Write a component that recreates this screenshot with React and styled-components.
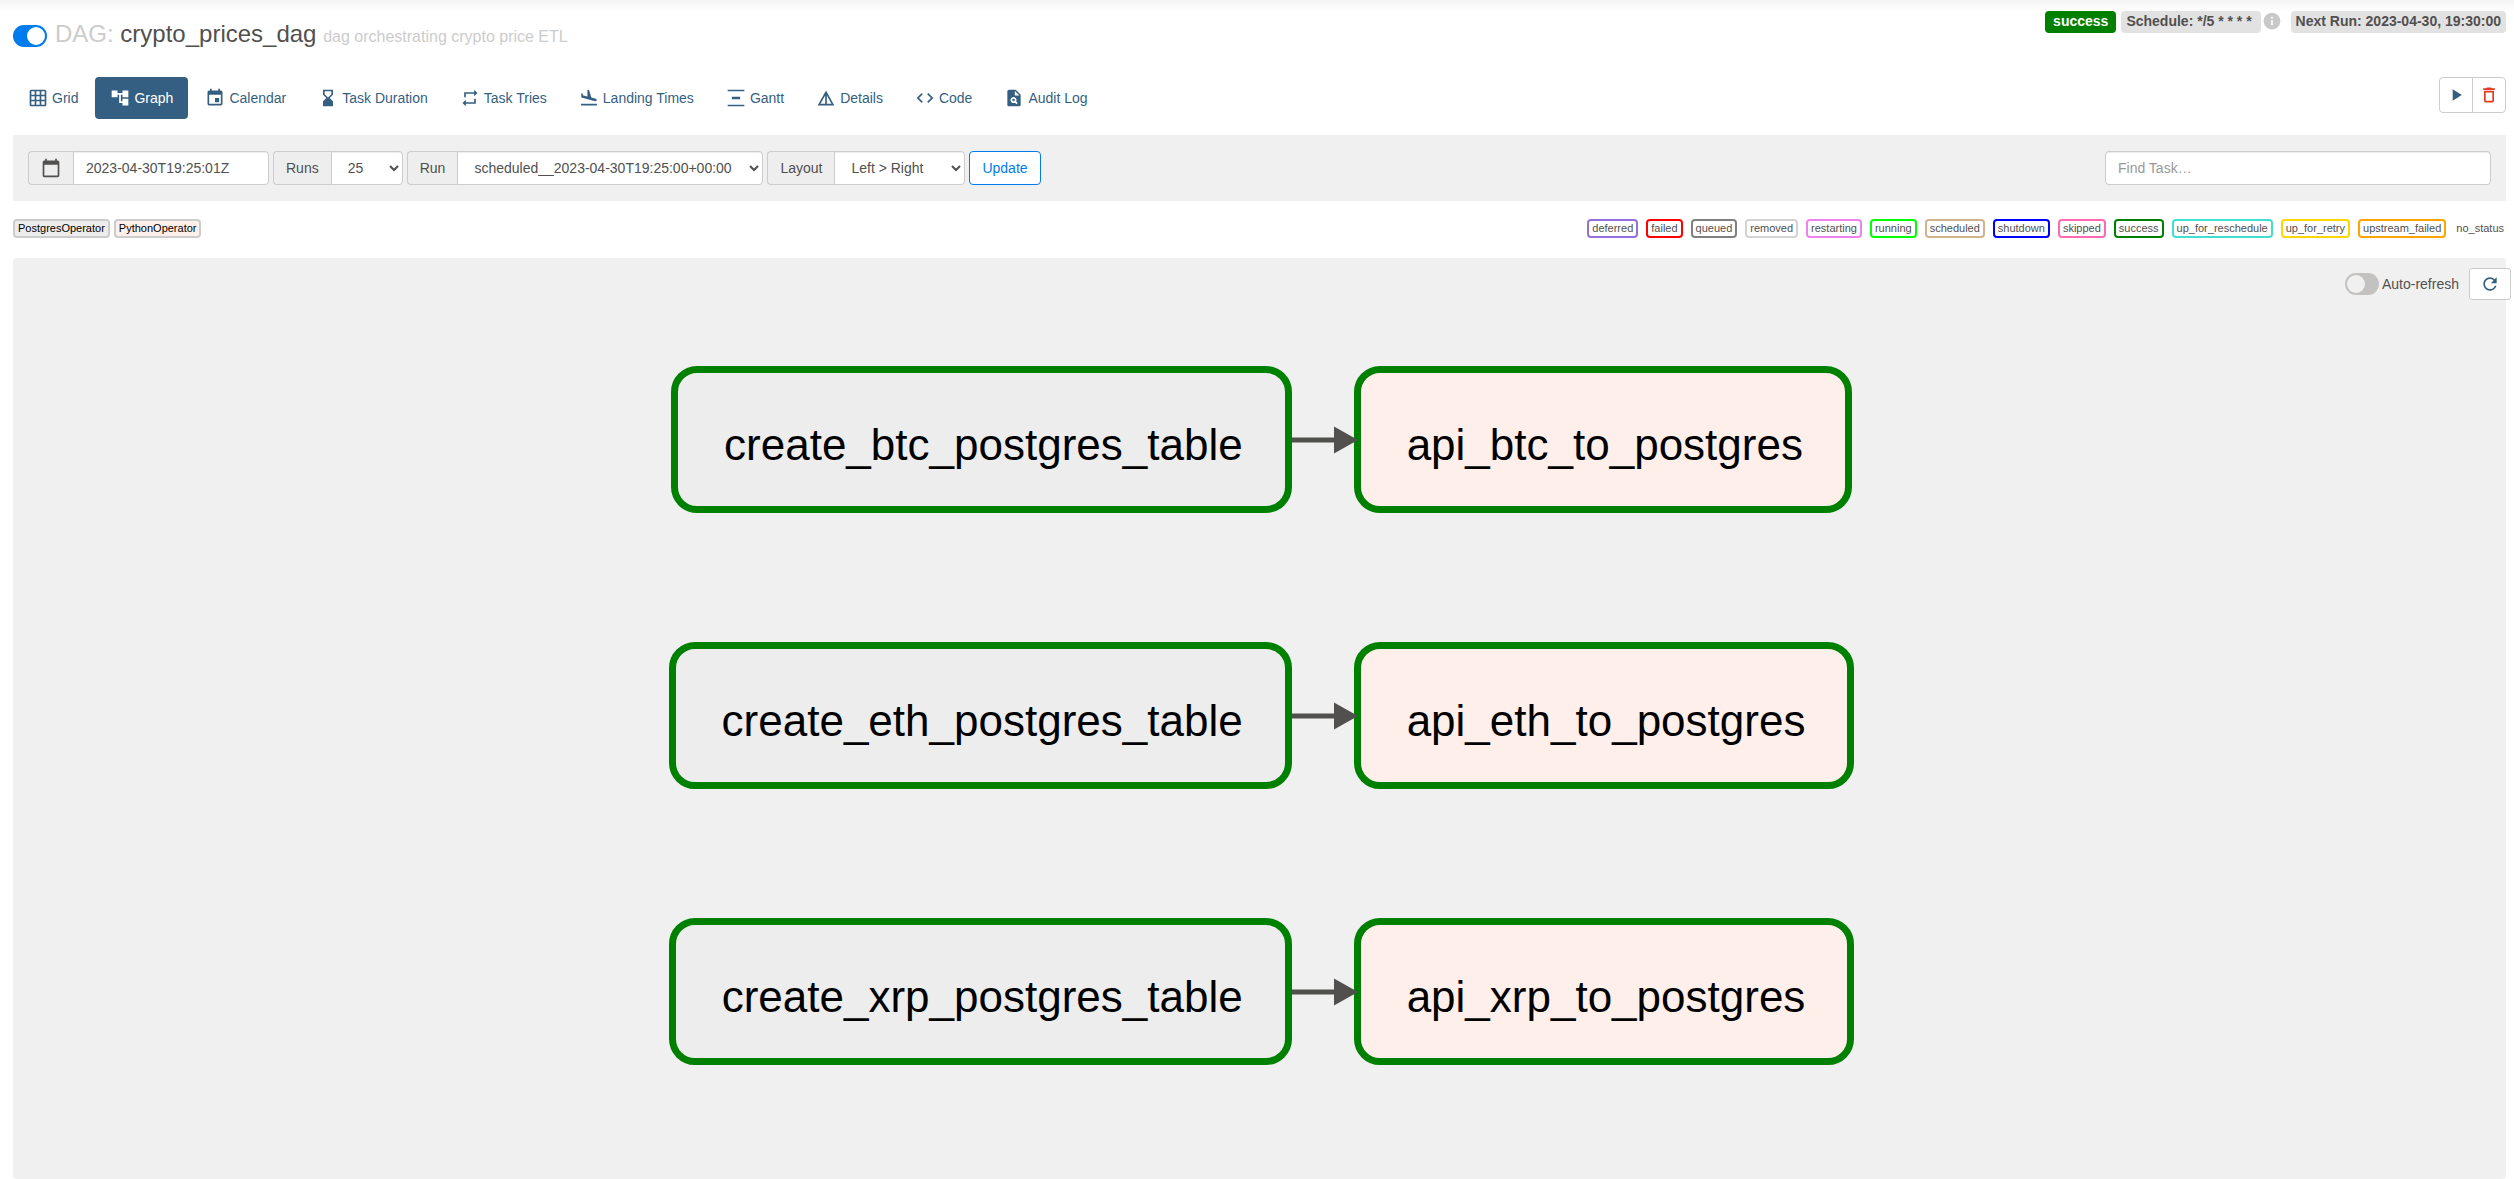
import React from 'react';
import styled, { createGlobalStyle } from 'styled-components';
import {
  MdGridOn, MdAccountTree, MdEvent, MdHourglassBottom, MdRepeat, MdFlightLand,
  MdVerticalDistribute, MdDetails, MdCode, MdPlagiarism, MdCalendarToday,
  MdPlayArrow, MdDeleteOutline, MdRefresh, MdInfo,
} from 'react-icons/md';

const ink = '#51504f';
const navy = '#355f82';
const blue = '#017cee';
const line = '#cccccc';
const panel = '#f0f0f0';

const GlobalStyle = createGlobalStyle`
  *, *::before, *::after { box-sizing: border-box; }
  body {
    margin: 0;
    background: #fff;
    color: ${ink};
    font: 14px/20px "Liberation Sans", Arial, sans-serif;
  }
  button, input, select { font: inherit; color: inherit; margin: 0; }
  svg { display: block; flex: none; }
`;

const Page = styled.div`
  min-height: 100vh;
  display: flex;
  flex-direction: column;
  padding: 0 8px 0 13px;
  background: linear-gradient(#f4f4f4, #fff) 0 0 / 100% 12px no-repeat;
`;

const Header = styled.header`
  display: flex;
  justify-content: space-between;
  align-items: flex-start;
  height: 77px;
  padding-top: 11px;
`;

const TitleBar = styled.div`
  display: flex;
  align-items: flex-end;
  gap: 8px;
  padding-top: 10px;
`;

const Switch = styled.input`
  appearance: none;
  width: 34px;
  height: 22px;
  padding: 2px;
  border-radius: 11px;
  background: ${(p) => (p.checked ? blue : '#c4c2c1')};
  display: flex;
  justify-content: ${(p) => (p.checked ? 'flex-end' : 'flex-start')};
  &::before {
    content: "";
    width: 18px;
    height: 18px;
    border-radius: 50%;
    background: ${(p) => (p.checked ? '#fff' : panel)};
  }
`;

const Title = styled.h1`
  margin: 0;
  font-size: 24px;
  line-height: 26px;
  font-weight: 400;
`;

const Muted = styled.span`
  color: ${line};
`;

const Subtitle = styled.small`
  color: ${line};
  font-size: 16px;
  line-height: 20px;
`;

const Badges = styled.div`
  display: flex;
  align-items: flex-start;
`;

const Badge = styled.span`
  padding: 0 ${(p) => (p.$solid ? 8 : 5)}px 2px;
  border-radius: 4px;
  font-weight: 700;
  line-height: 20px;
  white-space: pre;
  background: ${(p) => (p.$solid ? 'green' : '#e2e2e2')};
  color: ${(p) => (p.$solid ? '#fff' : ink)};
  & + & { margin-left: 5px; }
`;

const Info = styled.span`
  color: #c8c8c8;
  margin: 0 9px 0 1px;
`;

const NavRow = styled.div`
  display: flex;
  justify-content: space-between;
  align-items: flex-start;
`;

const Tabs = styled.nav`
  display: flex;
  gap: 2px;
`;

const Tab = styled.a`
  display: flex;
  align-items: center;
  gap: 4px;
  height: 42px;
  padding: 0 15px;
  border-radius: 4px;
  text-decoration: none;
  color: ${(p) => (p.$active ? '#fff' : navy)};
  background: ${(p) => (p.$active ? navy : 'transparent')};
`;

const Actions = styled.div`
  display: flex;
`;

const IconButton = styled.button`
  display: flex;
  align-items: center;
  justify-content: center;
  width: 34px;
  height: 36px;
  padding: 0;
  border: 1px solid ${line};
  background: #fff;
  color: ${(p) => (p.$danger ? '#e43921' : navy)};
  border-radius: 4px;
  &:first-child:not(:last-child) { border-radius: 4px 0 0 4px; }
  & + & { border-radius: 0 4px 4px 0; margin-left: -1px; }
`;

const Toolbar = styled.form`
  display: flex;
  justify-content: space-between;
  margin-top: 16px;
  padding: 16px 15px;
  background: ${panel};
`;

const Fields = styled.div`
  display: flex;
  gap: 4px;
`;

const Group = styled.div`
  display: flex;
`;

const Addon = styled.label`
  display: flex;
  align-items: center;
  height: 34px;
  padding: 0 12px;
  border: 1px solid ${line};
  border-right: 0;
  border-radius: 4px 0 0 4px;
  background: #eeeeee;
`;

const TextField = styled.input`
  width: ${(p) => p.$width}px;
  height: 34px;
  padding: 6px 12px;
  border: 1px solid ${line};
  border-radius: ${(p) => (p.$joined ? '0 4px 4px 0' : '4px')};
  background: #fff;
  box-shadow: inset 0 1px 1px rgba(0, 0, 0, 0.075);
  &::placeholder { color: #999; opacity: 1; }
`;

const SelectField = styled.select`
  width: ${(p) => p.$width}px;
  height: 34px;
  padding: 6px 12px;
  padding-right: 0;
  border: 1px solid ${line};
  border-radius: 0 4px 4px 0;
  background: #fff;
  box-shadow: inset 0 1px 1px rgba(0, 0, 0, 0.075);
`;

const UpdateButton = styled.button`
  height: 34px;
  padding: 0 12px;
  border: 1px solid ${blue};
  border-radius: 4px;
  background: #fff;
  color: ${blue};
`;

const Legend = styled.div`
  display: flex;
  justify-content: space-between;
  padding: 18px 0 20px;
`;

const LegendGroup = styled.div`
  display: flex;
  gap: ${(p) => p.$gap}px;
`;

const Tag = styled.span`
  padding: 0 3px;
  border: 2px solid ${(p) => p.$border};
  border-radius: 4px;
  background: ${(p) => p.$fill || '#fff'};
  color: ${(p) => (p.$fill ? '#000' : ink)};
  font-size: 11px;
  line-height: 15px;
`;

const PlainTag = styled.span`
  padding: 2px;
  font-size: 11px;
  line-height: 15px;
`;

const Graph = styled.main`
  position: relative;
  flex: 1;
  display: flex;
  flex-direction: column;
  align-items: center;
  gap: 129px;
  padding: 108px 0 108px 4px;
  border-radius: 4px;
  background: ${panel};
`;

const RefreshBar = styled.div`
  position: absolute;
  top: 10px;
  right: -5px;
  display: flex;
  align-items: center;
`;

const RefreshLabel = styled.label`
  display: flex;
  align-items: center;
  gap: 3px;
  margin-right: 10px;
`;

const RefreshButton = styled.button`
  display: flex;
  align-items: center;
  justify-content: center;
  width: 42px;
  height: 32px;
  padding: 0;
  border: 1px solid ${line};
  border-radius: 3px;
  background: #fff;
  color: ${navy};
`;

const Flow = styled.div`
  display: flex;
  align-items: center;
`;

const Node = styled.div`
  height: 147px;
  padding: 50px 42px 0 46px;
  border: 7px solid green;
  border-radius: 26px;
  background: ${(p) => p.$fill};
  color: #000;
  font-size: 44px;
  line-height: 44px;
`;

const Edge = styled.svg`
  position: relative;
  margin-right: -4px;
`;

const tabs = [
  ['Grid', MdGridOn],
  ['Graph', MdAccountTree],
  ['Calendar', MdEvent],
  ['Task Duration', MdHourglassBottom],
  ['Task Tries', MdRepeat],
  ['Landing Times', MdFlightLand],
  ['Gantt', MdVerticalDistribute],
  ['Details', MdDetails],
  ['Code', MdCode],
  ['Audit Log', MdPlagiarism],
];

const operators = [
  ['PostgresOperator', '#ededed'],
  ['PythonOperator', '#ffefeb'],
];

const states = [
  ['deferred', 'mediumpurple'],
  ['failed', 'red'],
  ['queued', 'gray'],
  ['removed', 'lightgrey'],
  ['restarting', 'violet'],
  ['running', 'lime'],
  ['scheduled', 'tan'],
  ['shutdown', 'blue'],
  ['skipped', 'hotpink'],
  ['success', 'green'],
  ['up_for_reschedule', 'turquoise'],
  ['up_for_retry', 'gold'],
  ['upstream_failed', 'orange'],
];

const coins = ['btc', 'eth', 'xrp'];

export default function App() {
  return (
    <Page>
      <GlobalStyle />
      <Header>
        <TitleBar>
          <Switch type="checkbox" role="switch" aria-label="Pause or unpause DAG" checked readOnly />
          <Title>
            <Muted>DAG:</Muted> crypto_prices_dag{' '}
            <Subtitle>dag orchestrating crypto price ETL</Subtitle>
          </Title>
        </TitleBar>
        <Badges>
          <Badge $solid>success</Badge>
          <Badge>{'Schedule: */5 * * * * '}</Badge>
          <Info><MdInfo size={20} /></Info>
          <Badge>Next Run: 2023-04-30, 19:30:00</Badge>
        </Badges>
      </Header>

      <NavRow>
        <Tabs>
          {tabs.map(([name, Icon]) => (
            <Tab key={name} href="#" $active={name === 'Graph'}>
              <Icon size={20} />
              {name}
            </Tab>
          ))}
        </Tabs>
        <Actions>
          <IconButton type="button" aria-label="Trigger DAG"><MdPlayArrow size={20} /></IconButton>
          <IconButton type="button" aria-label="Delete DAG" $danger><MdDeleteOutline size={20} /></IconButton>
        </Actions>
      </NavRow>

      <Toolbar onSubmit={(e) => e.preventDefault()}>
        <Fields>
          <Group>
            <Addon htmlFor="base-date" aria-label="Base date"><MdCalendarToday size={20} /></Addon>
            <TextField id="base-date" $width={196} $joined defaultValue="2023-04-30T19:25:01Z" />
          </Group>
          <Group>
            <Addon htmlFor="runs">Runs</Addon>
            <SelectField id="runs" $width={72}><option>25</option></SelectField>
          </Group>
          <Group>
            <Addon htmlFor="run">Run</Addon>
            <SelectField id="run" $width={306}><option>scheduled__2023-04-30T19:25:00+00:00</option></SelectField>
          </Group>
          <Group>
            <Addon htmlFor="layout">Layout</Addon>
            <SelectField id="layout" $width={131}><option>Left &gt; Right</option></SelectField>
          </Group>
          <UpdateButton type="submit">Update</UpdateButton>
        </Fields>
        <TextField type="text" aria-label="Find Task" placeholder="Find Task…" $width={386} />
      </Toolbar>

      <Legend>
        <LegendGroup $gap={4}>
          {operators.map(([name, fill]) => <Tag key={name} $border={line} $fill={fill}>{name}</Tag>)}
        </LegendGroup>
        <LegendGroup $gap={8}>
          {states.map(([name, color]) => <Tag key={name} $border={color}>{name}</Tag>)}
          <PlainTag>no_status</PlainTag>
        </LegendGroup>
      </Legend>

      <Graph>
        <RefreshBar>
          <RefreshLabel>
            <Switch type="checkbox" role="switch" checked={false} readOnly />
            Auto-refresh
          </RefreshLabel>
          <RefreshButton type="button" aria-label="Refresh"><MdRefresh size={20} /></RefreshButton>
        </RefreshBar>
        {coins.map((coin) => (
          <Flow key={coin}>
            <Node $fill="#ededed">{`create_${coin}_postgres_table`}</Node>
            <Edge width="66" height="28" viewBox="0 0 66 28" aria-hidden="true">
              <path d="M0 14H44" stroke={ink} strokeWidth="5" />
              <path d="M42 0.500L66 14L42 27.500Z" fill={ink} />
            </Edge>
            <Node $fill="#ffefeb">{`api_${coin}_to_postgres`}</Node>
          </Flow>
        ))}
      </Graph>
    </Page>
  );
}
